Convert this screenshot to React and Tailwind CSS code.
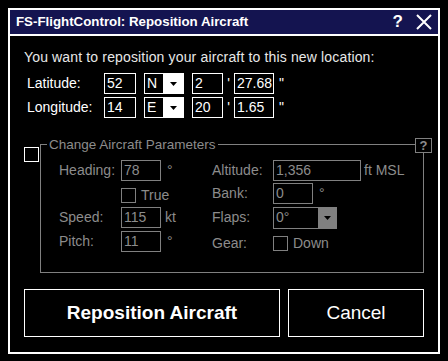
import React from 'react';

function Arrow() {
  return (
    <svg width="7" height="4" viewBox="0 0 7 4">
      <polygon points="0,0 7,0 3.5,4" fill="#000" />
    </svg>
  );
}

function Field({ value, w, dim }) {
  return (
    <div
      className={`h-[21px] ${w} border ${dim ? 'border-[#808080] text-[#8c8c8c]' : 'border-white text-white'} pl-[2px] leading-[18px] text-[14px]`}
    >
      {value}
    </div>
  );
}

function Select({ value }) {
  return (
    <div className="flex h-[21px] w-[40px] border border-white">
      <div className="flex-1 border-r border-white pl-[2px] text-[14px] leading-[18px] text-white">{value}</div>
      <div className="flex w-[19px] items-center justify-center bg-white">
        <Arrow />
      </div>
    </div>
  );
}

function Box() {
  return <div className="h-[15px] w-[15px] border border-[#808080]" />;
}

export default function App() {
  return (
    <div className="h-[361px] w-[448px] bg-black p-2 font-['Liberation_Sans',Arial,sans-serif] text-[14px]">
      <div className="flex h-[346px] w-[432px] flex-col border-2 border-white">
        {/* Title bar */}
        <div className="flex h-[26px] items-center justify-between border-b-2 border-white bg-[#141450] pl-[6px] pr-[6px]">
          <span className="text-[13.3px] font-bold text-white">FS-FlightControl: Reposition Aircraft</span>
          <div className="flex items-center gap-[13px]">
            <span className="text-[17px] font-bold text-white">?</span>
            <svg width="16" height="16" viewBox="0 0 16 16">
              <path d="M1 1 L15 15 M15 1 L1 15" stroke="#fff" strokeWidth="2" />
            </svg>
          </div>
        </div>

        {/* Body */}
        <div className="flex flex-col px-[14px] pt-[13px]">
          <p className="leading-[16px] tracking-[0.15px] text-[#e8e8e8]">You want to reposition your aircraft to this new location:</p>

          <div className="mt-[8px] flex h-[21px] items-center text-white">
            <span className="w-[80px] pl-[3px]">Latitude:</span>
            <Field value="52" w="w-[32px]" />
            <div className="ml-[8px]"><Select value="N" /></div>
            <div className="ml-[8px]"><Field value="2" w="w-[31px]" /></div>
            <span className="w-[11px] text-center">'</span>
            <Field value="27.68" w="w-[40px]" />
            <span className="ml-[5px]">"</span>
          </div>
          <div className="mt-[3px] flex h-[21px] items-center text-white">
            <span className="w-[80px] pl-[3px]">Longitude:</span>
            <Field value="14" w="w-[32px]" />
            <div className="ml-[8px]"><Select value="E" /></div>
            <div className="ml-[8px]"><Field value="20" w="w-[31px]" /></div>
            <span className="w-[11px] text-center">'</span>
            <Field value="1.65" w="w-[40px]" />
            <span className="ml-[5px]">"</span>
          </div>

          {/* Aircraft parameters group */}
          <div className="relative mt-[19px] flex items-start">
            <div className="mt-[10px] h-[15px] w-[15px] border border-white" />
            <fieldset className="ml-[1px] h-[136px] w-[384px] border border-[#808080] pt-[8px]">
              <legend className="ml-[6px] px-[2px] text-[13.5px] leading-[15px] text-[#8c8c8c]">Change Aircraft Parameters</legend>
              <div className="flex pl-[18px] text-[#8c8c8c]">
                <div className="flex w-[153px] flex-col">
                  <div className="flex h-[24px] items-start">
                    <span className="w-[62px] leading-[21px]">Heading:</span>
                    <Field value="78" w="w-[40px]" dim />
                    <span className="ml-[6px] leading-[21px]">°</span>
                  </div>
                  <div className="flex h-[23px] items-start pl-[62px] pt-[4px]">
                    <Box />
                    <span className="ml-[5px] leading-[15px]">True</span>
                  </div>
                  <div className="flex h-[24px] items-start">
                    <span className="w-[62px] leading-[21px]">Speed:</span>
                    <Field value="115" w="w-[40px]" dim />
                    <span className="ml-[4px] leading-[21px]">kt</span>
                  </div>
                  <div className="flex h-[24px] items-start">
                    <span className="w-[62px] leading-[21px]">Pitch:</span>
                    <Field value="11" w="w-[40px]" dim />
                    <span className="ml-[6px] leading-[21px]">°</span>
                  </div>
                </div>
                <div className="flex flex-col">
                  <div className="flex h-[23px] items-start">
                    <span className="w-[61px] leading-[21px]">Altitude:</span>
                    <Field value="1,356" w="w-[88px]" dim />
                    <span className="ml-[3px] leading-[21px]">ft MSL</span>
                  </div>
                  <div className="flex h-[24px] items-start">
                    <span className="w-[61px] leading-[21px]">Bank:</span>
                    <Field value="0" w="w-[40px]" dim />
                    <span className="ml-[6px] leading-[21px]">°</span>
                  </div>
                  <div className="flex h-[24px] items-start">
                    <span className="w-[61px] leading-[21px]">Flaps:</span>
                    <div className="flex h-[22px] w-[64px] border border-[#808080]">
                      <div className="flex-1 pl-[2px] leading-[19px]">0°</div>
                      <div className="flex w-[18px] items-center justify-center bg-[#808080]">
                        <Arrow />
                      </div>
                    </div>
                  </div>
                  <div className="flex h-[24px] items-center">
                    <span className="w-[61px] leading-[21px]">Gear:</span>
                    <Box />
                    <span className="ml-[5px]">Down</span>
                  </div>
                </div>
              </div>
            </fieldset>
            <div className="absolute left-[391px] top-[1px] flex h-[15px] w-[17px] items-center justify-center border border-[#808080] bg-black text-[13px] font-bold leading-none text-[#8c8c8c]">
              ?
            </div>
          </div>

          {/* Buttons */}
          <div className="mt-[16px] flex gap-[8px]">
            <button className="h-[48px] w-[256px] border border-white text-[19px] font-bold text-white">
              Reposition Aircraft
            </button>
            <button className="h-[48px] w-[136px] border border-white text-[19px] text-white">Cancel</button>
          </div>
        </div>
      </div>
    </div>
  );
}
